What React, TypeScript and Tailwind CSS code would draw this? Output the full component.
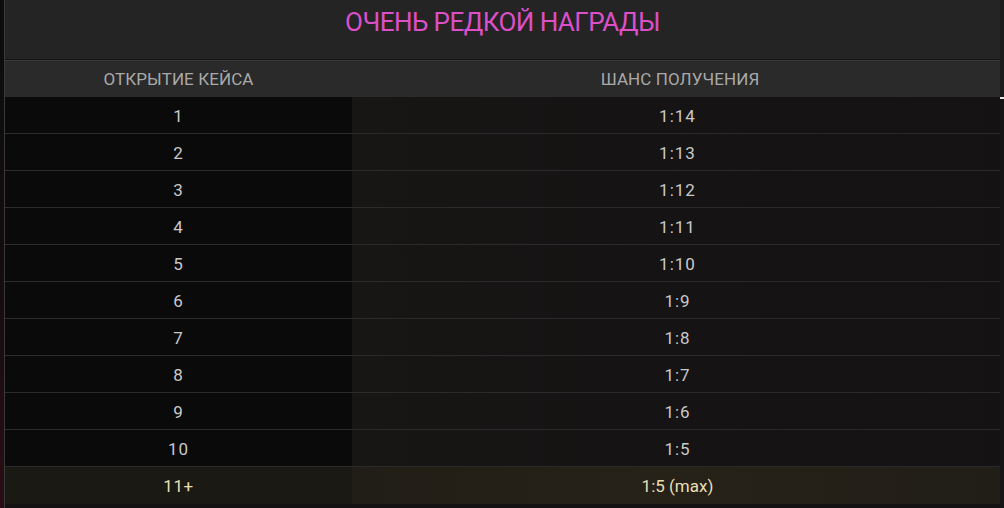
import React from "react";

const rows: [string, string][] = [
  ["1", "1:14"],
  ["2", "1:13"],
  ["3", "1:12"],
  ["4", "1:11"],
  ["5", "1:10"],
  ["6", "1:9"],
  ["7", "1:8"],
  ["8", "1:7"],
  ["9", "1:6"],
  ["10", "1:5"],
];

export default function App() {
  return (
    <div
      className="w-[1004px] h-[508px] overflow-hidden flex bg-[#0c0b0b]"
      style={{ fontFamily: "Roboto, 'Noto Sans', sans-serif" }}
    >
      <div className="w-[4px] h-full bg-gradient-to-b from-[#0d0d0d] via-[#120c0d] to-[#2a0d14]" />
      <div className="w-[1px] h-full bg-[#383838]" />
      <div className="flex-1 flex flex-col">
        <div className="h-[59px] bg-[#242424] flex items-center justify-center">
          <span className="text-[26px] text-[#dc4fc8] tracking-[-0.55px] leading-none -mt-[16px]">
            ОЧЕНЬ РЕДКОЙ НАГРАДЫ
          </span>
        </div>
        <div className="h-[1px] bg-[#141414]" />
        <div className="h-[1px] bg-[#3a3a3a]" />
        <div className="h-[36px] bg-[#2a2a2a] flex text-[17px] text-[#a9a9a9] tracking-[0.1px]">
          <div className="w-[347px] flex items-center justify-center pt-[1px]">ОТКРЫТИЕ КЕЙСА</div>
          <div className="flex-1 flex items-center justify-center pl-[8px] pt-[1px]">ШАНС ПОЛУЧЕНИЯ</div>
        </div>
        {rows.map(([a, b], i) => (
          <div key={i} className="h-[37px] flex text-[17px] text-[#c9c9c9] tracking-[1px]">
            <div className="w-[347px] flex flex-col">
              <div className="flex-1 flex items-center justify-center bg-[#0b0a0a] pt-[3px]">{a}</div>
              <div className="h-[1px] bg-[#2c2c2c]" />
            </div>
            <div className="flex-1 flex flex-col">
              <div className="flex-1 flex items-center justify-center bg-gradient-to-r from-[#181515] via-[#151313] to-[#141212] pl-[3px] pt-[3px]">
                {b}
              </div>
              <div className="h-[1px] bg-[#2a2a2a]" />
            </div>
          </div>
        ))}
        <div className="h-[37px] flex text-[17px] text-[#e9dfb4] tracking-[0px]">
          <div className="w-[347px] flex items-center justify-center bg-[#1b1914] pt-[2px] tracking-[0.5px]">11+</div>
          <div className="flex-1 flex items-center justify-center bg-gradient-to-r from-[#211e17] via-[#262218] to-[#211e18] pl-[3px] pt-[2px]">
            1:5 (max)
          </div>
        </div>
        <div className="flex-1 bg-[#141212]" />
      </div>
      <div className="w-[4px] h-full flex flex-col bg-[#1c1c1c]">
        <div className="h-[97px]" />
        <div className="h-[2px] bg-[#e6e6e6]" />
        <div className="flex-1 bg-[#161414]" />
      </div>
    </div>
  );
}
